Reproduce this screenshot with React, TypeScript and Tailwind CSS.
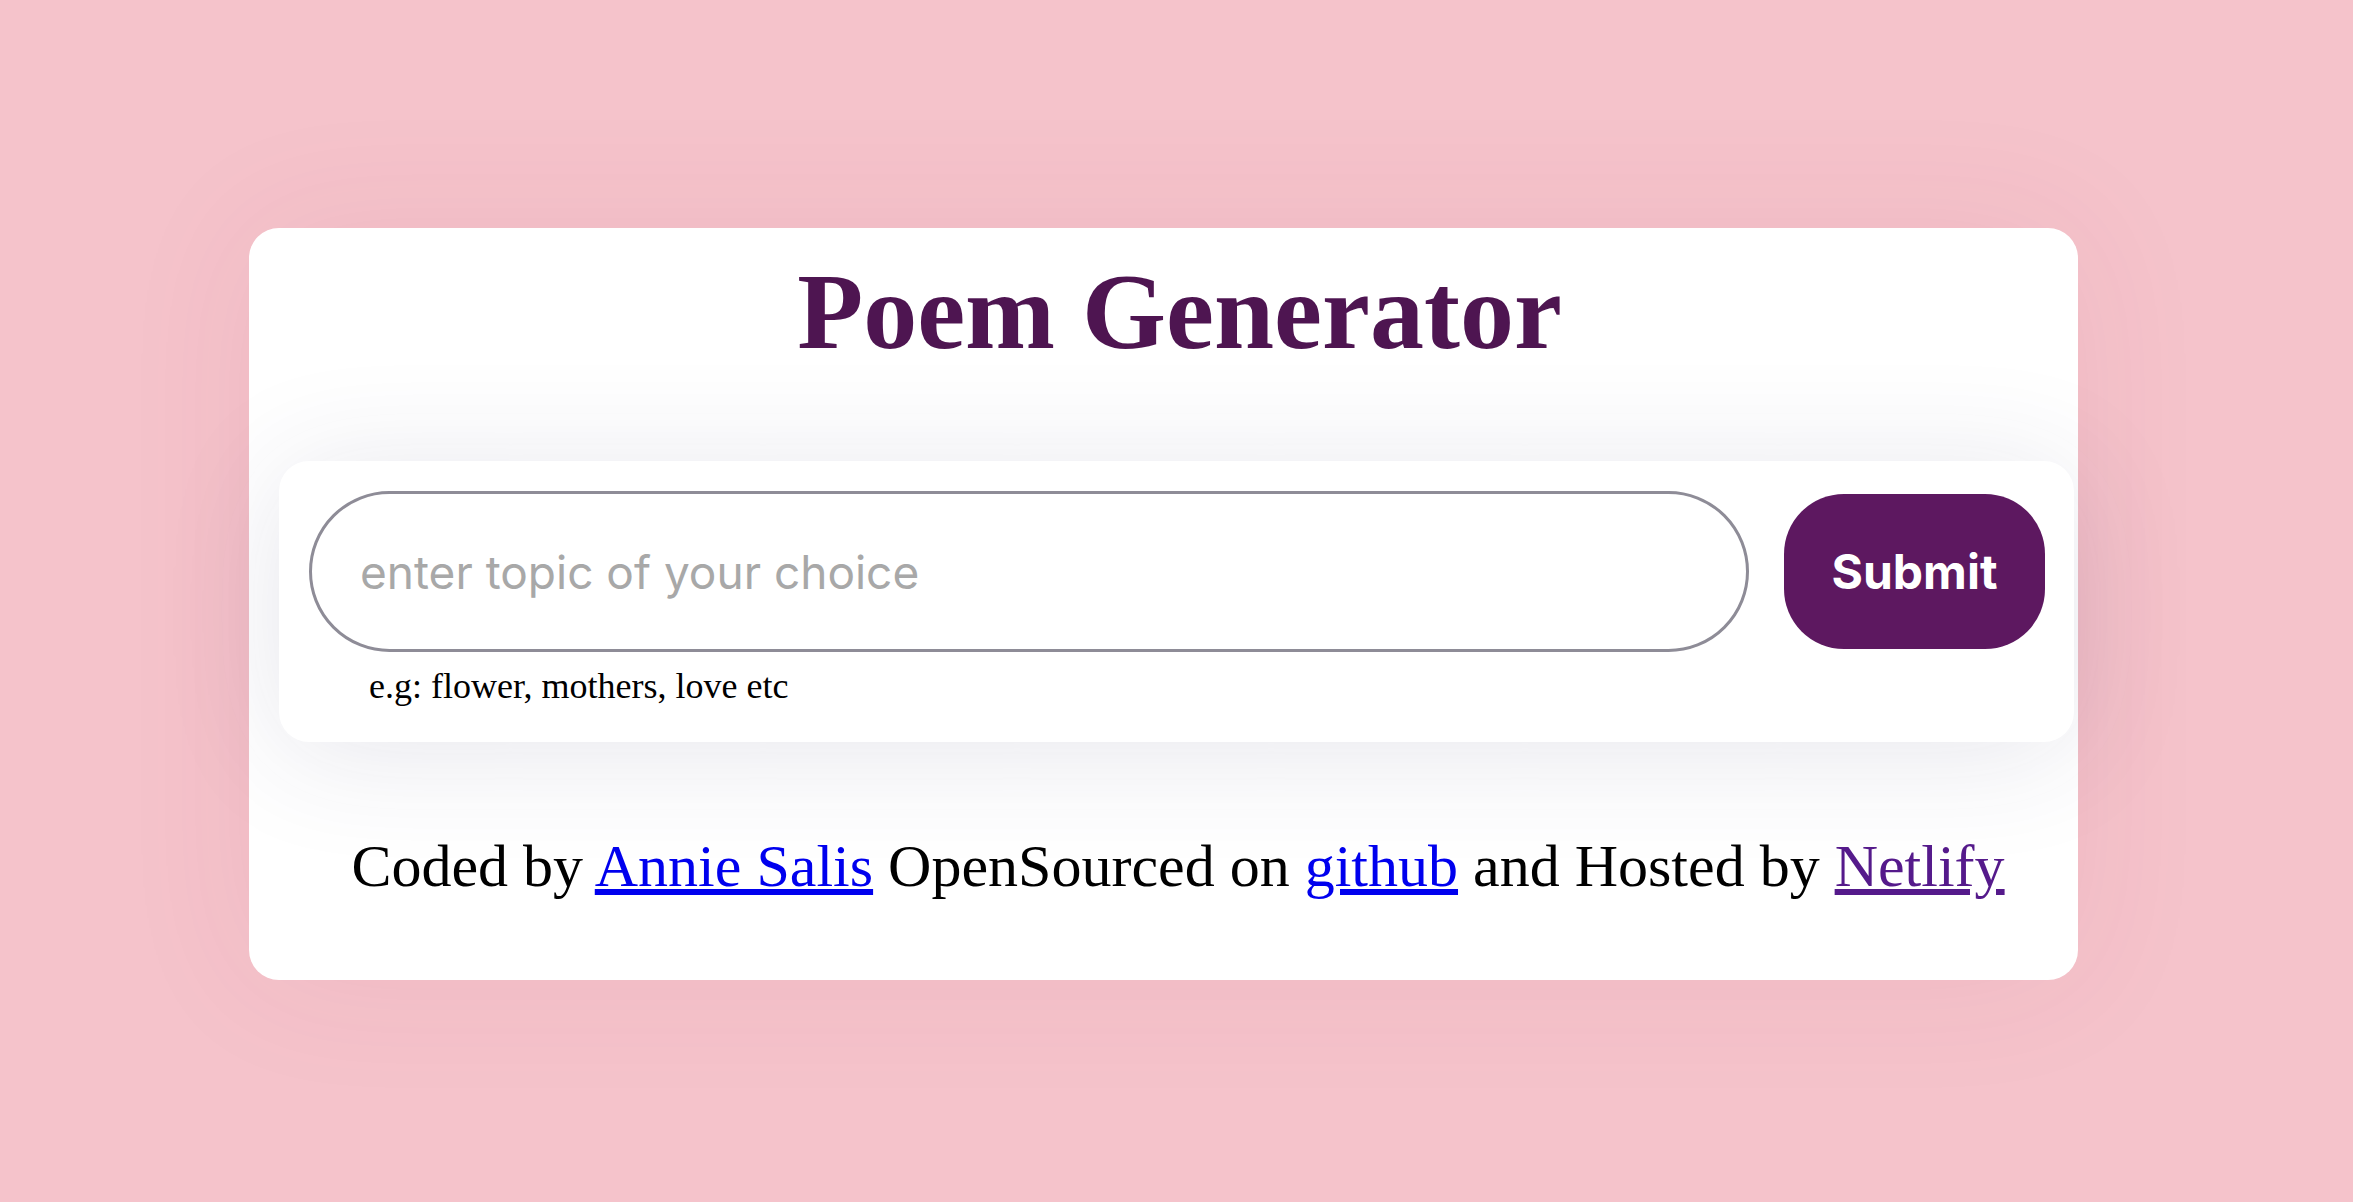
import React from "react";

export default function App() {
  return (
    <div className="min-h-screen w-full bg-[#f5c3cb] flex">
      <div className="mt-[228px] ml-[249px] w-[1829px] h-[752px] bg-white rounded-[30px] pl-[30px] pr-[4px] shadow-[0_0_140px_rgba(150,50,80,0.07)] flex flex-col">
        <h1 className="pt-[30px] pl-[6px] text-center text-[108px] font-bold leading-none text-[#4e1551] font-['Liberation_Serif',serif]">
          Poem Generator
        </h1>
        <div className="mt-[95px] h-[281px] rounded-[30px] bg-white pt-[30px] pl-[30px] shadow-[0_10px_120px_rgba(50,50,100,0.12)]">
          <div className="flex items-center gap-[35px]">
            <input
              type="text"
              placeholder="enter topic of your choice"
              className="w-[1440px] h-[161px] rounded-full border-[3px] border-[#8e8c97] bg-white pl-[48px] text-[46px] font-['Inter',sans-serif] text-black placeholder:text-[#a8a8a8] outline-none"
            />
            <button className="w-[261px] h-[155px] rounded-[60px] bg-[#5d1860] text-white text-[48px] font-bold font-['Inter',sans-serif]">
              Submit
            </button>
          </div>
          <p className="mt-[16px] ml-[60px] text-[36px] leading-none text-black font-['Liberation_Serif',serif]">
            e.g: flower, mothers, love etc
          </p>
        </div>
        <p className="mt-[94px] pl-[3px] text-center text-[60px] leading-none text-black font-['Liberation_Serif',serif]">
          Coded by{" "}
          <a href="#" className="text-[#0000ee] underline">
            Annie Salis
          </a>{" "}
          OpenSourced on{" "}
          <a href="#" className="text-[#0000ee] underline">
            github
          </a>{" "}
          and Hosted by{" "}
          <a href="#" className="text-[#551a8b] underline">
            Netlify
          </a>
        </p>
      </div>
    </div>
  );
}
